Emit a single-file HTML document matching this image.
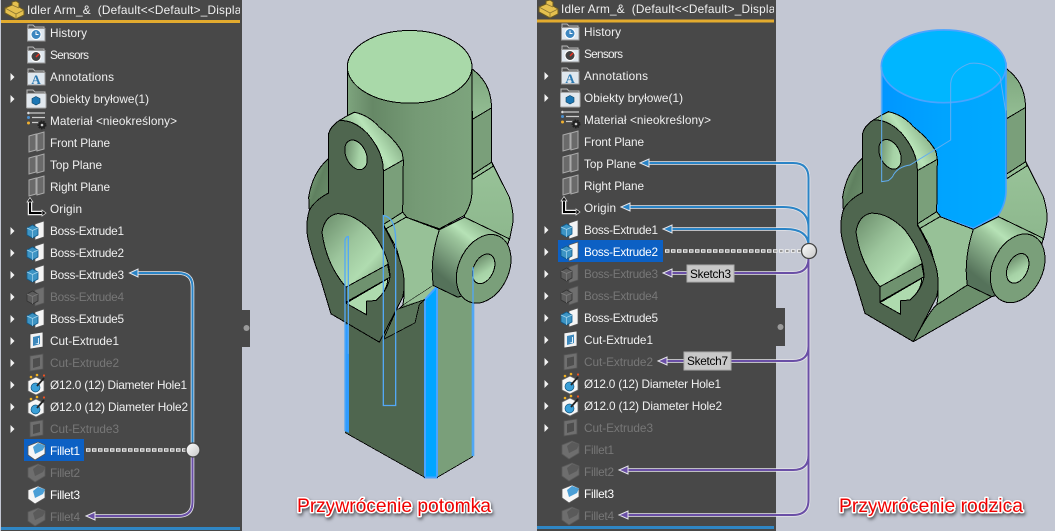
<!DOCTYPE html>
<html><head><meta charset="utf-8"><style>
html,body{margin:0;padding:0;background:#c3c7d3;width:1055px;height:531px;overflow:hidden}
svg{display:block}
.t{font:11.8px "Liberation Sans",sans-serif;fill:#f0f0f0}
.d{font:11.8px "Liberation Sans",sans-serif;fill:#777}
.ti{font:11.8px "Liberation Sans",sans-serif;letter-spacing:.2px;fill:#f0f0f0}
.o{fill:none;stroke:#e6e6ea;stroke-width:3.6}
.b{fill:none;stroke:#2a84c6;stroke-width:2}
.p{fill:none;stroke:#6a4fa6;stroke-width:2}
.ab{fill:#2a84c6;stroke:#e6e6ea;stroke-width:1}
.ap{fill:#6a4fa6;stroke:#e6e6ea;stroke-width:1}
.k{stroke:#000;stroke-width:3;stroke-linejoin:round}
.big{font:19.3px "Liberation Sans",sans-serif;fill:#f00000;stroke:#fff;stroke-width:3;paint-order:stroke;stroke-linejoin:round;filter:drop-shadow(1px 2px 1.5px rgba(0,0,0,.55))}
.lab{font:11.8px "Liberation Sans",sans-serif;fill:#000}
.dw{fill:none;stroke:#eee;stroke-width:3.5;stroke-dasharray:4.5 1.5}
.dg{fill:none;stroke:#666;stroke-width:1.2;stroke-dasharray:2.5 3.5;stroke-dashoffset:-1}
</style></head><body>
<svg width="1055" height="531" viewBox="0 0 1055 531" xmlns="http://www.w3.org/2000/svg">
<defs>
<linearGradient id="cg" gradientUnits="userSpaceOnUse" x1="155" y1="0" x2="528" y2="0"><stop offset="0" stop-color="#7ea47e"/><stop offset=".2" stop-color="#668866"/><stop offset=".55" stop-color="#759a75"/><stop offset="1" stop-color="#7da47d"/></linearGradient>
<linearGradient id="bg" gradientUnits="userSpaceOnUse" x1="155" y1="0" x2="528" y2="0"><stop offset="0" stop-color="#0096ff"/><stop offset=".5" stop-color="#00a4ff"/><stop offset="1" stop-color="#00aaff"/></linearGradient>
<linearGradient id="ls" gradientUnits="userSpaceOnUse" x1="440" y1="770" x2="560" y2="620"><stop offset="0" stop-color="#55725a"/><stop offset=".6" stop-color="#9cc59c"/><stop offset=".75" stop-color="#b6e2b6"/><stop offset="1" stop-color="#93bd93"/></linearGradient>
<linearGradient id="at" gradientUnits="userSpaceOnUse" x1="150" y1="350" x2="260" y2="280"><stop offset="0" stop-color="#7fa67f"/><stop offset=".5" stop-color="#b8e4b8"/><stop offset="1" stop-color="#86ae86"/></linearGradient>
<linearGradient id="bh" gradientUnits="userSpaceOnUse" x1="80" y1="600" x2="280" y2="780"><stop offset="0" stop-color="#6f926f"/><stop offset=".4" stop-color="#9cc59c"/><stop offset=".7" stop-color="#b0dcb0"/><stop offset="1" stop-color="#7a9f7a"/></linearGradient>
<linearGradient id="lb" x1="0" y1="0" x2="1" y2="1"><stop offset="0" stop-color="#8cb68c"/><stop offset=".5" stop-color="#5f805f"/><stop offset="1" stop-color="#6e916e"/></linearGradient>
<linearGradient id="rb" x1="0" y1="0" x2="0" y2="1"><stop offset="0" stop-color="#7ea67e"/><stop offset=".4" stop-color="#9cc79c"/><stop offset="1" stop-color="#8db78d"/></linearGradient>
<linearGradient id="hg" x1="0" y1="0" x2="1" y2="1"><stop offset="0" stop-color="#5c7b5c"/><stop offset=".6" stop-color="#a6d2a6"/><stop offset="1" stop-color="#b6e2b6"/></linearGradient>
<linearGradient id="sph" x1="0" y1="0" x2="1" y2="1"><stop offset="0" stop-color="#fff"/><stop offset="1" stop-color="#c6c6c6"/></linearGradient>

<g id="folder"><path d="M-8,-4V-8H-3L-1,-6H8V-4" fill="#555" stroke="#b8b8b8"/><rect x="-8.5" y="-4.5" width="17.500" height="12.500" fill="#dfe7ee" stroke="#999"/></g>
<g id="iHist"><use href="#folder"/><circle cx="0" cy="1.500" r="5" fill="#3c86c0" stroke="#fff"/><path d="M0,-1.500V1.500H2.500" stroke="#fff" fill="none"/></g>
<g id="iSens"><use href="#folder"/><circle cx="0" cy="1.500" r="5" fill="#444" stroke="#fff"/><path d="M0,2L3,-1" stroke="#f03020" stroke-width="1.500"/></g>
<g id="iAnn"><use href="#folder"/><text x="0" y="7" text-anchor="middle" font-family="Liberation Serif,serif" font-weight="bold" font-size="13" fill="#2a78b0">A</text></g>
<g id="iBod"><path d="M-9,-4V-9H-3L-1,-7H9V-4" fill="#555" stroke="#bbb"/><rect x="-9.500" y="-5.500" width="19.500" height="14.500" rx="1" fill="#e2e8ee" stroke="#aaa"/><path d="M0,-2.500L4,-.5V4L0,6L-4,4V-.5Z" fill="#1c76b4" stroke="#0a4060" stroke-width=".6"/></g>
<g id="iMat"><path d="M-6,-8H9M-4,-3.500H9M-4,1.500H3" stroke="#ccc" stroke-width="1.300" fill="none"/><circle cx="-7.500" cy="-8" r="1.300" fill="#ddd"/><circle cx="-7.500" cy="-3.500" r="1.500" fill="#4a90d0"/><circle cx="-7.500" cy="2" r="1.500" fill="#f0b030"/><circle cx="6" cy="4" r="3.500" fill="#222" stroke="#222" stroke-width="2" stroke-dasharray="1.500 1"/><circle cx="6" cy="4" r="1.300" fill="#ccc"/></g>
<g id="iPl"><path d="M-7,-7L0,-9V7L-7,9ZM1,-9L8,-11V6L1,8Z" fill="#6a6a6a" stroke="#aaa" stroke-width="1"/></g>
<g id="iOr"><path d="M-6,-8V4H7" fill="none" stroke="#eee" stroke-width="4.500"/><path d="M-6,-8V4H7" fill="none" stroke="#000" stroke-width="2"/><path d="M-6,-11.500L-9,-7H-3ZM10,4L6,1V7Z" fill="#111" stroke="#ddd" stroke-width=".7"/></g>
<g id="iBoss"><path d="M-1,-7L8,-10V6L-1,9Z" fill="#f4f4f4" stroke="#555" stroke-width=".7"/><path d="M-9,-3L-3.500,-6L2,-3V4L-3.500,7L-9,4Z" fill="#3d94c4" stroke="#0f5a8a" stroke-width=".8"/><path d="M-9,-3L-3.500,-.5L2,-3M-3.500,-.5V7" stroke="#a6d6ee" stroke-width=".7" fill="none"/></g>
<g id="iBossG"><path d="M-1,-7L8,-10V6L-1,9Z" fill="#6f6f6f" stroke="#555" stroke-width=".7"/><path d="M-9,-3L-3.500,-6L2,-3V4L-3.500,7L-9,4Z" fill="#5c5c5c" stroke="#333" stroke-width=".8"/><path d="M-9,-3L-3.500,-.5L2,-3M-3.500,-.5V7" stroke="#808080" stroke-width=".7" fill="none"/></g>
<g id="iCut"><path d="M-6,-7L7,-9V6L-6,8Z" fill="#f2f2f2" stroke="#444" stroke-width=".8"/><path d="M-3,-4L4,-5.500V3L-3,5Z" fill="#3d88bc"/><path d="M-1,3L2,2V-3L3,-3V3Z" fill="#dff0fa"/></g>
<g id="iCutG"><path d="M-6,-7L7,-9V6L-6,8Z" fill="#6f6f6f" stroke="#555" stroke-width=".8"/><path d="M-3,-4L4,-5.500V3L-3,5Z" fill="#4d4d4d"/></g>
<g id="iHole"><path d="M-8,-4L0,-8L8,-4V6L0,10L-8,6Z" fill="#f6f6f6" stroke="#666" stroke-width=".8"/><ellipse cx="-.5" cy="2.500" rx="4.500" ry="4.500" fill="#3aa0d8" stroke="#14557e" stroke-width=".7"/><path d="M1,1L8,-7" stroke="#222" stroke-width="1.800"/><circle cx="-5" cy="-8" r="1.300" fill="#f0b020"/><circle cx="1" cy="-10" r="1.300" fill="#f0b020"/><circle cx="8" cy="-9.500" r="1.100" fill="#f05020"/></g>
<g id="iFil"><path d="M-8,-5L2,-9L9,-6V3L-1,9L-8,4Z" fill="#f6f6f6" stroke="#555" stroke-width=".8"/><path d="M-3,-4L2,-8L9,-5.500L7,-1L-1,3Z" fill="#4b9fd6"/></g>
<g id="iFilG"><path d="M-8,-5L2,-9L9,-6V3L-1,9L-8,4Z" fill="#6e6e6e" stroke="#5a5a5a" stroke-width=".8"/><path d="M-3,-4L2,-8L9,-5.500L7,-1L-1,3Z" fill="#5a5a5a"/></g>
<path id="tri" d="M10.500,-4L14.500,0L10.500,4Z" fill="#f2f2f2"/>
<g id="root"><path d="M5,8L12,5V2L16,1L19,3V7L24,10V15L16,19L5,13Z" fill="#e5c04f" stroke="#6b5a20" stroke-width="1"/><path d="M5,8L16,14V19M16,14L24,10M12,5L19,8" stroke="#8a7430" fill="none" stroke-width=".8"/></g>

<g id="mBack" shape-rendering="crispEdges">
<path class="k" d="M528,145C560,170 585,200 587,262V425L640,530Q655,580 650,610L640,660L505,590L530,470Z" fill="url(#rb)"/>
<path class="k" d="M530,296L587,262V425L530,462Z" fill="#7a9f7a"/>
<path class="k" d="M530,462L587,425L592,437L530,476Z" fill="#93bd93"/>
<path class="k" d="M97,415Q50,455 38,530L40,570L97,520Z" fill="url(#lb)"/>
</g>
<g id="mMid" shape-rendering="crispEdges">
<path class="k" d="M130,300L155,285L175,275Q220,285 250,320Q300,360 318,395L322,418L262,452Q262,395 215,340Q175,298 130,300Z" fill="url(#at)"/>
<path class="k" d="M262,452L322,418L320,575L262,612Z" fill="#7a9f7a"/>
<path class="k" d="M262,612L320,575L332,590L270,628Z" fill="#93bd93"/>
<path class="k" d="M270,625L330,590L430,628Q400,720 412,795L320,855Q335,790 300,680Z" fill="#97c197"/>
<path class="k" d="M320,855L412,795L485,830L250,965Q300,870 320,855Z" fill="#6c8f6c"/>
</g>
<g id="mFront" shape-rendering="crispEdges">
<path class="k" d="M430,628L505,590L640,655L600,800L485,830L412,795Q400,720 430,628Z" fill="url(#ls)"/>
<ellipse class="k" cx="563" cy="745" rx="75" ry="108" transform="rotate(25 563 745)" fill="#7a9f7a"/>
<ellipse class="k" cx="563" cy="745" rx="30" ry="47" transform="rotate(25 563 745)" fill="url(#hg)"/>
<path class="k" d="M97,518V345Q100,320 130,300Q175,298 215,340Q262,395 262,450V615Q300,680 318,740Q330,790 320,830Q300,870 250,965L105,880Q90,830 75,780Q45,700 35,650Q28,610 40,570Q55,540 97,518Z" fill="#4f664f"/>
<ellipse class="k" cx="180" cy="403" rx="30" ry="47" transform="rotate(-25 180 403)" fill="url(#hg)"/>
<path class="k" d="M78,635Q85,590 120,580Q170,575 225,630Q282,705 282,770Q275,810 240,840L212,842V883L150,848V800Q90,730 78,635Z" fill="url(#bh)"/>
<path class="k" d="M150,800L275,732L282,770L150,845Z" fill="#6f926f"/>
<path class="k" d="M150,848L275,775Q275,810 240,840L212,842V883Z" fill="#aedaae"/>
</g>
</defs>

<!-- panels -->
<rect x="1" y="0" width="241" height="531" fill="#484848"/>
<path d="M242,310H250V347H242Z" fill="#484848"/>
<circle cx="246.500" cy="328" r="3" fill="#9a9a9a"/>
<rect x="1" y="20" width="239" height="3" fill="#e3ab2e"/>
<rect x="1" y="527" width="239" height="3" fill="#2f86c4"/>
<rect x="24" y="439" width="60" height="22" fill="#0c60c4"/>

<rect x="537" y="0" width="239" height="531" fill="#484848"/>
<path d="M776,308H785V346H776Z" fill="#484848"/>
<circle cx="780.500" cy="327" r="3" fill="#9a9a9a"/>
<rect x="537" y="19.500" width="237" height="3" fill="#e3ab2e"/>
<rect x="537" y="526" width="237" height="3" fill="#2f86c4"/>
<rect x="558" y="240" width="105" height="22" fill="#0c60c4"/>

<!-- left tree -->
<use href="#root" x="0" y="0"/>
<svg x="1" y="0" width="239" height="20"><text class="ti" x="26" y="14">Idler Arm_&amp;&#160; (Default&lt;&lt;Default&gt;_Display State 1&gt;)</text></svg>
<g>
<use href="#iHist" x="36" y="33"/><text class="t" x="50" y="37" textLength="37">History</text>
<use href="#iSens" x="36" y="55"/><text class="t" x="50" y="59" textLength="39">Sensors</text>
<use href="#tri" x="0" y="77"/><use href="#iAnn" x="36" y="77"/><text class="t" x="50" y="81" textLength="64">Annotations</text>
<use href="#tri" x="0" y="99"/><use href="#iBod" x="36" y="99"/><text class="t" x="50" y="103" textLength="99">Obiekty bryłowe(1)</text>
<use href="#iMat" x="36" y="121"/><text class="t" x="50" y="125" textLength="127">Materiał &lt;nieokreślony&gt;</text>
<use href="#iPl" x="36" y="143"/><text class="t" x="50" y="147" textLength="60">Front Plane</text>
<use href="#iPl" x="36" y="165"/><text class="t" x="50" y="169" textLength="52">Top Plane</text>
<use href="#iPl" x="36" y="187"/><text class="t" x="50" y="191" textLength="60">Right Plane</text>
<use href="#iOr" x="36" y="209"/><text class="t" x="50" y="213" textLength="32">Origin</text>
<use href="#tri" x="0" y="231"/><use href="#iBoss" x="36" y="231"/><text class="t" x="50" y="235" textLength="74">Boss-Extrude1</text>
<use href="#tri" x="0" y="253"/><use href="#iBoss" x="36" y="253"/><text class="t" x="50" y="257" textLength="74">Boss-Extrude2</text>
<use href="#tri" x="0" y="275"/><use href="#iBoss" x="36" y="275"/><text class="t" x="50" y="279" textLength="74">Boss-Extrude3</text>
<use href="#tri" x="0" y="297"/><use href="#iBossG" x="36" y="297"/><text class="d" x="50" y="301" textLength="74">Boss-Extrude4</text>
<use href="#tri" x="0" y="319"/><use href="#iBoss" x="36" y="319"/><text class="t" x="50" y="323" textLength="74">Boss-Extrude5</text>
<use href="#tri" x="0" y="341"/><use href="#iCut" x="36" y="341"/><text class="t" x="50" y="345" textLength="69">Cut-Extrude1</text>
<use href="#tri" x="0" y="363"/><use href="#iCutG" x="36" y="363"/><text class="d" x="50" y="367" textLength="69">Cut-Extrude2</text>
<use href="#tri" x="0" y="385"/><use href="#iHole" x="36" y="385"/><text class="t" x="50" y="389" textLength="137">Ø12.0 (12) Diameter Hole1</text>
<use href="#tri" x="0" y="407"/><use href="#iHole" x="36" y="407"/><text class="t" x="50" y="411" textLength="138">Ø12.0 (12) Diameter Hole2</text>
<use href="#tri" x="0" y="429"/><use href="#iCutG" x="36" y="429"/><text class="d" x="50" y="433" textLength="69">Cut-Extrude3</text>
<use href="#iFil" x="36" y="451"/><text class="t" x="50" y="455" textLength="30" style="fill:#fff">Fillet1</text>
<use href="#iFilG" x="36" y="473"/><text class="d" x="50" y="477" textLength="30">Fillet2</text>
<use href="#iFil" x="36" y="495"/><text class="t" x="50" y="499" textLength="30" style="fill:#fff">Fillet3</text>
<use href="#iFilG" x="36" y="517"/><text class="d" x="50" y="521" textLength="30">Fillet4</text>
</g>

<!-- right tree -->
<use href="#root" x="534" y="-1"/>
<svg x="537" y="0" width="237" height="19"><text class="ti" x="24" y="13">Idler Arm_&amp;&#160; (Default&lt;&lt;Default&gt;_Display State 1&gt;)</text></svg>
<g transform="translate(534,-1)">
<use href="#iHist" x="36" y="33"/><text class="t" x="50" y="37" textLength="37">History</text>
<use href="#iSens" x="36" y="55"/><text class="t" x="50" y="59" textLength="39">Sensors</text>
<use href="#tri" x="0" y="77"/><use href="#iAnn" x="36" y="77"/><text class="t" x="50" y="81" textLength="64">Annotations</text>
<use href="#tri" x="0" y="99"/><use href="#iBod" x="36" y="99"/><text class="t" x="50" y="103" textLength="99">Obiekty bryłowe(1)</text>
<use href="#iMat" x="36" y="121"/><text class="t" x="50" y="125" textLength="127">Materiał &lt;nieokreślony&gt;</text>
<use href="#iPl" x="36" y="143"/><text class="t" x="50" y="147" textLength="60">Front Plane</text>
<use href="#iPl" x="36" y="165"/><text class="t" x="50" y="169" textLength="52">Top Plane</text>
<use href="#iPl" x="36" y="187"/><text class="t" x="50" y="191" textLength="60">Right Plane</text>
<use href="#iOr" x="36" y="209"/><text class="t" x="50" y="213" textLength="32">Origin</text>
<use href="#tri" x="0" y="231"/><use href="#iBoss" x="36" y="231"/><text class="t" x="50" y="235" textLength="74">Boss-Extrude1</text>
<use href="#tri" x="0" y="253"/><use href="#iBoss" x="36" y="253"/><text class="t" x="50" y="257" textLength="74" style="fill:#fff">Boss-Extrude2</text>
<use href="#tri" x="0" y="275"/><use href="#iBossG" x="36" y="275"/><text class="d" x="50" y="279" textLength="74">Boss-Extrude3</text>
<use href="#tri" x="0" y="297"/><use href="#iBossG" x="36" y="297"/><text class="d" x="50" y="301" textLength="74">Boss-Extrude4</text>
<use href="#tri" x="0" y="319"/><use href="#iBoss" x="36" y="319"/><text class="t" x="50" y="323" textLength="74">Boss-Extrude5</text>
<use href="#tri" x="0" y="341"/><use href="#iCut" x="36" y="341"/><text class="t" x="50" y="345" textLength="69">Cut-Extrude1</text>
<use href="#tri" x="0" y="363"/><use href="#iCutG" x="36" y="363"/><text class="d" x="50" y="367" textLength="69">Cut-Extrude2</text>
<use href="#tri" x="0" y="385"/><use href="#iHole" x="36" y="385"/><text class="t" x="50" y="389" textLength="137">Ø12.0 (12) Diameter Hole1</text>
<use href="#tri" x="0" y="407"/><use href="#iHole" x="36" y="407"/><text class="t" x="50" y="411" textLength="138">Ø12.0 (12) Diameter Hole2</text>
<use href="#tri" x="0" y="429"/><use href="#iCutG" x="36" y="429"/><text class="d" x="50" y="433" textLength="69">Cut-Extrude3</text>
<use href="#iFilG" x="36" y="451"/><text class="d" x="50" y="455" textLength="30">Fillet1</text>
<use href="#iFilG" x="36" y="473"/><text class="d" x="50" y="477" textLength="30">Fillet2</text>
<use href="#iFil" x="36" y="495"/><text class="t" x="50" y="499" textLength="30" style="fill:#fff">Fillet3</text>
<use href="#iFilG" x="36" y="517"/><text class="d" x="50" y="521" textLength="30">Fillet4</text>
</g>

<!-- left connectors -->
<path class="o" d="M135,273H178Q192.500,273 192.500,287V444"/><path class="b" d="M135,273H178Q192.500,273 192.500,287V444"/>
<path class="ab" d="M129.500,273L138,269V277Z"/>
<path class="o" d="M192.500,456V502Q192.500,516 178,516H92"/><path class="p" d="M192.500,456V502Q192.500,516 178,516H92"/>
<path class="ap" d="M86,516L95,512V520Z"/>
<path class="dw" d="M86,450H186"/><path class="dg" d="M86,450H186"/>
<circle cx="193" cy="450" r="7" fill="url(#sph)" stroke="#444" stroke-width="1.300"/>

<!-- right connectors -->
<path class="o" d="M646,163H793Q808.500,163 808.500,178V244M627,207H783Q808.500,207 808.500,228M669,229H785Q808.500,229 808.500,246"/>
<path class="b" d="M646,163H793Q808.500,163 808.500,178V244M627,207H783Q808.500,207 808.500,228M669,229H785Q808.500,229 808.500,246"/>
<path class="ab" d="M640,163L649,159V167ZM621,207L630,203V211ZM663,229L672,225V233Z"/>
<path class="o" d="M808.500,258V500Q808.500,515 793,515H625M808.500,258Q808.500,273 793,273H669M808.500,346Q808.500,361 793,361H664M808.500,455Q808.500,470 793,470H625"/>
<path class="p" d="M808.500,258V500Q808.500,515 793,515H625M808.500,258Q808.500,273 793,273H669M808.500,346Q808.500,361 793,361H664M808.500,455Q808.500,470 793,470H625"/>
<path class="ap" d="M663,273L672,269V277ZM658,361L667,357V365ZM619,470L628,466V474ZM619,515L628,511V519Z"/>
<path class="dw" d="M665,251H802"/><path class="dg" d="M665,251H802"/>
<circle cx="809" cy="251" r="7.500" fill="url(#sph)" stroke="#444" stroke-width="1.300"/>
<rect x="687" y="265" width="47" height="17" fill="#c8c8c8" stroke="#aaa"/>
<text class="lab" x="690" y="278" textLength="41">Sketch3</text>
<rect x="684" y="352" width="47" height="18" fill="#c8c8c8" stroke="#aaa"/>
<text class="lab" x="687" y="365" textLength="41">Sketch7</text>

<!-- left model -->
<g transform="translate(296,20.500) scale(.33333)">
<use href="#mBack"/>
<path class="k" shape-rendering="crispEdges" d="M155,138V500H320V575L330,590L430,625L505,585Q528,550 528,510V130Z" fill="url(#cg)"/>
<ellipse class="k" shape-rendering="crispEdges" cx="341" cy="139" rx="187" ry="109" fill="#a9d9a9"/>
<use href="#mMid"/>
<path d="M320,855L412,795L423,798L387,837Z" fill="#97c197"/>
<path d="M147,900L302,867L387,837V1371L147,1236Z" fill="#4f664f"/>
<path d="M423,798V1371L531,1308V800Z" fill="#7a9f7a"/>
<path d="M387,837L423,798V1371H387Z" fill="#00a6ff" stroke="#4aa4ff" stroke-width="6"/>
<path shape-rendering="crispEdges" d="M147,1236L387,1371M423,1371L531,1308" stroke="#000" stroke-width="2.500"/>
<path d="M147,912H159V1237L147,1232Z" fill="#2f9cff"/>
<path shape-rendering="crispEdges" d="M302,867L262,957L357,907L370,852L387,837Z" fill="#5a755a" stroke="#000" stroke-width="2.500"/>
<path d="M527,770H535V1307H527Z" fill="#4ba6f5"/>
<use href="#mFront"/>
<path d="M147,1232V660Q149,648 157,648V1000M262,1155V585Q299,590 299,660V1155Z" fill="none" stroke="#53a8f5" stroke-width="4"/>
<path d="M531,740V1300" stroke="#53a8f5" stroke-width="4"/>
</g>

<!-- right model -->
<g transform="translate(830,20) scale(.33333)">
<use href="#mBack"/>
<path d="M155,138V500H320V575L330,590L430,625L505,585Q528,550 528,510V130Z" fill="url(#bg)" stroke="#4aa4ff" stroke-width="5"/>
<ellipse cx="341" cy="139" rx="187" ry="109" fill="#00b6ff" stroke="#4aa4ff" stroke-width="5"/>
<use href="#mMid"/>
<use href="#mFront"/>
<path d="M155,140V485L175,482Q190,470 190,465Q205,440 240,435L362,360V190Q365,150 420,130Q480,125 510,170L528,280" fill="none" stroke="#62aef2" stroke-width="3"/>
</g>

<text class="big" x="297" y="512" textLength="194">Przywrócenie potomka</text>
<text class="big" x="839" y="512" textLength="184">Przywrócenie rodzica</text>
</svg>
</body></html>
